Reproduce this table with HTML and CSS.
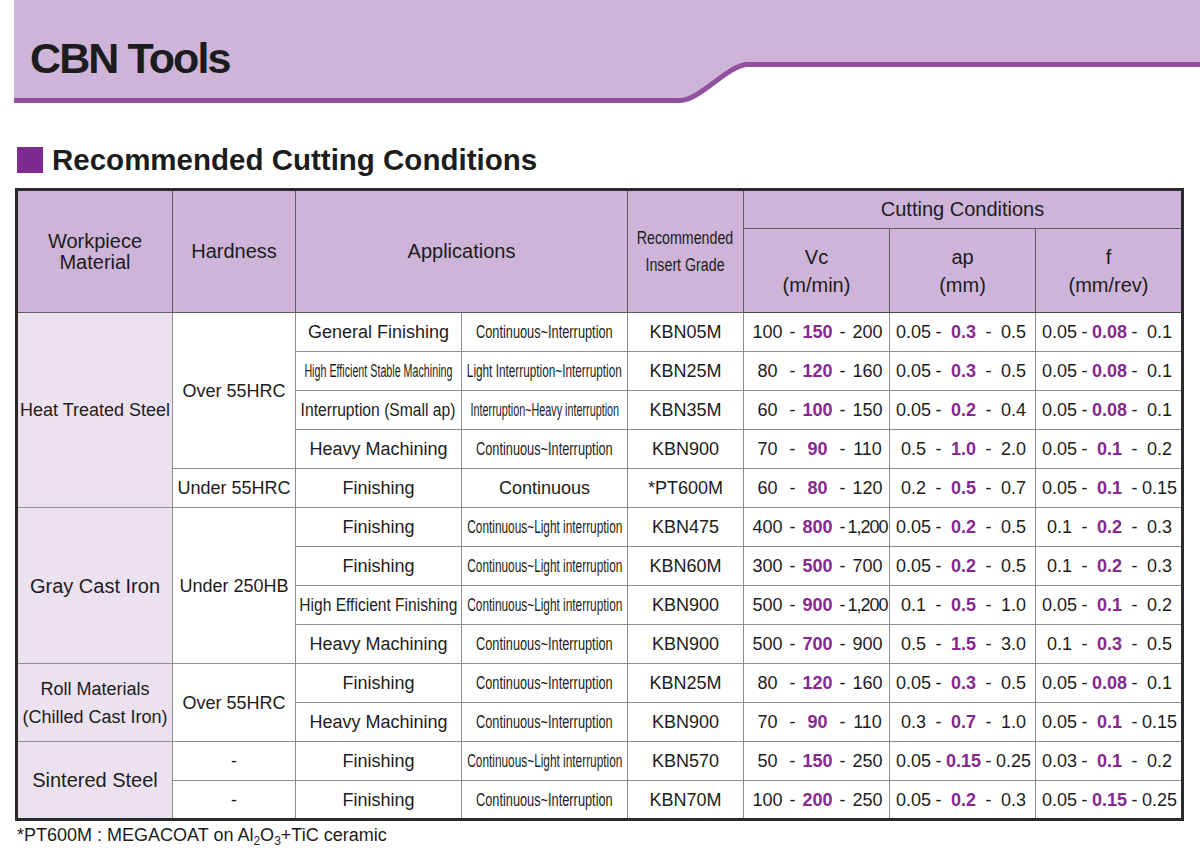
FILE: index.html
```html
<!DOCTYPE html>
<html lang="en">
<head>
<meta charset="utf-8">
<title>CBN Tools - Recommended Cutting Conditions</title>
<link rel="stylesheet" href="styles.css">
</head>
<body>
<header class="banner">
  <svg class="banner-bg" width="1186" height="106" viewBox="0 0 1186 106" aria-hidden="true">
    <path d="M0 0H1186V63H734C714 63 686 99 666 99H0Z" fill="#cdb4d8"/>
    <path d="M0 100.5H666C686 100.5 714 64.5 734 64.5H1186" fill="none" stroke="#9150a0" stroke-width="5"/>
  </svg>
  <h1 class="banner-title">CBN Tools</h1>
</header>

<h2 class="section-title">Recommended Cutting Conditions</h2>

<table class="cond">
  <colgroup>
    <col class="w-mat"><col class="w-hard"><col class="w-app1"><col class="w-app2"><col class="w-grade"><col class="w-vc"><col class="w-ap"><col class="w-f">
  </colgroup>
  <thead>
    <tr class="h1">
      <th rowspan="2" class="two">Workpiece<br>Material</th>
      <th rowspan="2">Hardness</th>
      <th rowspan="2" colspan="2">Applications</th>
      <th rowspan="2"><div class="fit col"><span class="sq sq79 hdr-n">Recommended</span><span class="sq sq79 hdr-n">Insert Grade</span></div></th>
      <th colspan="3">Cutting Conditions</th>
    </tr>
    <tr class="h2">
      <th class="unit">Vc<br>(m/min)</th>
      <th class="unit">ap<br>(mm)</th>
      <th class="unit">f<br>(mm/rev)</th>
    </tr>
  </thead>
  <tbody>
    <tr>
      <td rowspan="5" class="mat">Heat Treated Steel</td>
      <td rowspan="4">Over 55HRC</td>
      <td>General Finishing</td>
      <td><div class="fit"><span class="sq sq71">Continuous~Interruption</span></div></td>
      <td>KBN05M</td>
      <td><div class="rng"><span>100</span><span>-</span><b>150</b><span>-</span><span>200</span></div></td>
      <td><div class="rng"><span>0.05</span><span>-</span><b>0.3</b><span>-</span><span>0.5</span></div></td>
      <td><div class="rng"><span>0.05</span><span>-</span><b>0.08</b><span>-</span><span>0.1</span></div></td>
    </tr>
    <tr>
      <td><div class="fit"><span class="sq sq59">High Efficient Stable Machining</span></div></td>
      <td><div class="fit"><span class="sq sq65">Light Interruption~Interruption</span></div></td>
      <td>KBN25M</td>
      <td><div class="rng"><span>80</span><span>-</span><b>120</b><span>-</span><span>160</span></div></td>
      <td><div class="rng"><span>0.05</span><span>-</span><b>0.3</b><span>-</span><span>0.5</span></div></td>
      <td><div class="rng"><span>0.05</span><span>-</span><b>0.08</b><span>-</span><span>0.1</span></div></td>
    </tr>
    <tr>
      <td><div class="fit"><span class="sq sq87">Interruption (Small ap)</span></div></td>
      <td><div class="fit"><span class="sq sq60">Interruption~Heavy interruption</span></div></td>
      <td>KBN35M</td>
      <td><div class="rng"><span>60</span><span>-</span><b>100</b><span>-</span><span>150</span></div></td>
      <td><div class="rng"><span>0.05</span><span>-</span><b>0.2</b><span>-</span><span>0.4</span></div></td>
      <td><div class="rng"><span>0.05</span><span>-</span><b>0.08</b><span>-</span><span>0.1</span></div></td>
    </tr>
    <tr>
      <td>Heavy Machining</td>
      <td><div class="fit"><span class="sq sq71">Continuous~Interruption</span></div></td>
      <td>KBN900</td>
      <td><div class="rng"><span>70</span><span>-</span><b>90</b><span>-</span><span>110</span></div></td>
      <td><div class="rng"><span>0.5</span><span>-</span><b>1.0</b><span>-</span><span>2.0</span></div></td>
      <td><div class="rng"><span>0.05</span><span>-</span><b>0.1</b><span>-</span><span>0.2</span></div></td>
    </tr>
    <tr>
      <td>Under 55HRC</td>
      <td>Finishing</td>
      <td>Continuous</td>
      <td>*PT600M</td>
      <td><div class="rng"><span>60</span><span>-</span><b>80</b><span>-</span><span>120</span></div></td>
      <td><div class="rng"><span>0.2</span><span>-</span><b>0.5</b><span>-</span><span>0.7</span></div></td>
      <td><div class="rng"><span>0.05</span><span>-</span><b>0.1</b><span>-</span><span>0.15</span></div></td>
    </tr>
    <tr>
      <td rowspan="4" class="mat big">Gray Cast Iron</td>
      <td rowspan="4">Under 250HB</td>
      <td>Finishing</td>
      <td><div class="fit"><span class="sq sq66">Continuous~Light interruption</span></div></td>
      <td>KBN475</td>
      <td><div class="rng"><span>400</span><span>-</span><b>800</b><span>-</span><span class="tight">1,200</span></div></td>
      <td><div class="rng"><span>0.05</span><span>-</span><b>0.2</b><span>-</span><span>0.5</span></div></td>
      <td><div class="rng"><span>0.1</span><span>-</span><b>0.2</b><span>-</span><span>0.3</span></div></td>
    </tr>
    <tr>
      <td>Finishing</td>
      <td><div class="fit"><span class="sq sq66">Continuous~Light interruption</span></div></td>
      <td>KBN60M</td>
      <td><div class="rng"><span>300</span><span>-</span><b>500</b><span>-</span><span>700</span></div></td>
      <td><div class="rng"><span>0.05</span><span>-</span><b>0.2</b><span>-</span><span>0.5</span></div></td>
      <td><div class="rng"><span>0.1</span><span>-</span><b>0.2</b><span>-</span><span>0.3</span></div></td>
    </tr>
    <tr>
      <td><div class="fit"><span class="sq sq86">High Efficient Finishing</span></div></td>
      <td><div class="fit"><span class="sq sq66">Continuous~Light interruption</span></div></td>
      <td>KBN900</td>
      <td><div class="rng"><span>500</span><span>-</span><b>900</b><span>-</span><span class="tight">1,200</span></div></td>
      <td><div class="rng"><span>0.1</span><span>-</span><b>0.5</b><span>-</span><span>1.0</span></div></td>
      <td><div class="rng"><span>0.05</span><span>-</span><b>0.1</b><span>-</span><span>0.2</span></div></td>
    </tr>
    <tr>
      <td>Heavy Machining</td>
      <td><div class="fit"><span class="sq sq71">Continuous~Interruption</span></div></td>
      <td>KBN900</td>
      <td><div class="rng"><span>500</span><span>-</span><b>700</b><span>-</span><span>900</span></div></td>
      <td><div class="rng"><span>0.5</span><span>-</span><b>1.5</b><span>-</span><span>3.0</span></div></td>
      <td><div class="rng"><span>0.1</span><span>-</span><b>0.3</b><span>-</span><span>0.5</span></div></td>
    </tr>
    <tr>
      <td rowspan="2" class="mat two-body">Roll Materials<br>(Chilled Cast Iron)</td>
      <td rowspan="2">Over 55HRC</td>
      <td>Finishing</td>
      <td><div class="fit"><span class="sq sq71">Continuous~Interruption</span></div></td>
      <td>KBN25M</td>
      <td><div class="rng"><span>80</span><span>-</span><b>120</b><span>-</span><span>160</span></div></td>
      <td><div class="rng"><span>0.05</span><span>-</span><b>0.3</b><span>-</span><span>0.5</span></div></td>
      <td><div class="rng"><span>0.05</span><span>-</span><b>0.08</b><span>-</span><span>0.1</span></div></td>
    </tr>
    <tr>
      <td>Heavy Machining</td>
      <td><div class="fit"><span class="sq sq71">Continuous~Interruption</span></div></td>
      <td>KBN900</td>
      <td><div class="rng"><span>70</span><span>-</span><b>90</b><span>-</span><span>110</span></div></td>
      <td><div class="rng"><span>0.3</span><span>-</span><b>0.7</b><span>-</span><span>1.0</span></div></td>
      <td><div class="rng"><span>0.05</span><span>-</span><b>0.1</b><span>-</span><span>0.15</span></div></td>
    </tr>
    <tr>
      <td rowspan="2" class="mat big">Sintered Steel</td>
      <td>-</td>
      <td>Finishing</td>
      <td><div class="fit"><span class="sq sq66">Continuous~Light interruption</span></div></td>
      <td>KBN570</td>
      <td><div class="rng"><span>50</span><span>-</span><b>150</b><span>-</span><span>250</span></div></td>
      <td><div class="rng"><span>0.05</span><span>-</span><b>0.15</b><span>-</span><span>0.25</span></div></td>
      <td><div class="rng"><span>0.03</span><span>-</span><b>0.1</b><span>-</span><span>0.2</span></div></td>
    </tr>
    <tr>
      <td>-</td>
      <td>Finishing</td>
      <td><div class="fit"><span class="sq sq71">Continuous~Interruption</span></div></td>
      <td>KBN70M</td>
      <td><div class="rng"><span>100</span><span>-</span><b>200</b><span>-</span><span>250</span></div></td>
      <td><div class="rng"><span>0.05</span><span>-</span><b>0.2</b><span>-</span><span>0.3</span></div></td>
      <td><div class="rng"><span>0.05</span><span>-</span><b>0.15</b><span>-</span><span>0.25</span></div></td>
    </tr>
  </tbody>
</table>

<p class="note">*PT600M : MEGACOAT on Al<sub>2</sub>O<sub>3</sub>+TiC ceramic</p>
</body>
</html>
```

FILE: styles.css
```css
* { box-sizing: border-box; }

html, body {
  margin: 0;
  padding: 0;
  background: #ffffff;
}

body {
  width: 1200px;
  height: 855px;
  overflow: hidden;
  font-family: "Liberation Sans", Arial, Helvetica, sans-serif;
  color: #1c1c1c;
}

/* ---------- top banner ---------- */
.banner {
  position: relative;
  margin-left: 14px;
  height: 104px;
}

.banner-bg {
  position: absolute;
  left: 0;
  top: 0;
}

.banner-title {
  position: relative;
  margin: 0;
  padding: 37px 0 0 16px;
  font-size: 43px;
  line-height: 1;
  font-weight: bold;
  letter-spacing: -1.9px;
  color: #1c1c1c;
}

/* ---------- section heading ---------- */
.section-title {
  display: flex;
  align-items: center;
  gap: 9px;
  margin: 43px 0 0 17px;
  height: 26px;
  font-size: 29.5px;
  line-height: 26px;
  font-weight: bold;
  color: #1c1c1c;
}

.section-title::before {
  content: "";
  flex: none;
  width: 26px;
  height: 26px;
  background: #7d2b91;
}

/* ---------- table ---------- */
.cond {
  margin: 15px 0 0 15px;
  border-collapse: collapse;
  table-layout: fixed;
  width: 1169px;
  border: 3px solid #2a2a2a;
}

.w-mat { width: 156px; }
.w-hard { width: 123px; }
.w-app1 { width: 166px; }
.w-app2 { width: 166px; }
.w-grade { width: 116px; }
.w-vc { width: 146px; }
.w-ap { width: 146px; }
.w-f { width: 147px; }

.cond th,
.cond td {
  padding: 0;
  border: 1px solid #8e8e8e;
  text-align: center;
  vertical-align: middle;
  white-space: nowrap;
  overflow: visible;
}

.cond th {
  background: #cdb4d8;
  font-weight: normal;
  font-size: 20px;
  line-height: 21px;
  border-color: #5e5e5e;
  color: #1c1c1c;
}

.cond thead tr:last-child th { border-bottom-color: #4a4a4a; }

.h1 { height: 39px; }
.h2 { height: 84px; }

.cond th.unit { line-height: 28px; }

.cond td {
  font-size: 18px;
  line-height: 22px;
  height: 39px;
}

.cond td.mat { background: #ece2ef; }
.cond td.big { font-size: 20px; }
.cond td.two-body { line-height: 28px; }

/* squeezed (condensed) text */
.fit {
  display: flex;
  justify-content: center;
}

.fit.col {
  flex-direction: column;
  align-items: center;
}

.sq {
  display: inline-block;
  flex: none;
  white-space: nowrap;
  transform-origin: center;
}

.hdr-n { font-size: 18px; line-height: 27px; }

.sq59 { transform: scaleX(0.595); }
.sq60 { transform: scaleX(0.60); }
.sq65 { transform: scaleX(0.655); }
.sq66 { transform: scaleX(0.658); }
.sq71 { transform: scaleX(0.71); }
.sq79 { transform: scaleX(0.79); }
.sq86 { transform: scaleX(0.865); }
.sq87 { transform: scaleX(0.87); }

/* numeric ranges */
.rng {
  display: grid;
  grid-template-columns: repeat(5, 25px);
  padding-left: 11px;
  justify-items: center;
}

.rng > * { white-space: nowrap; }

.rng b {
  color: #86288f;
  font-weight: bold;
}

.rng .tight { letter-spacing: -1px; }

/* ---------- footnote ---------- */
.note {
  margin: 3px 0 0 17px;
  font-size: 18px;
  line-height: 22px;
  color: #1c1c1c;
}

.note sub {
  font-size: 12px;
  line-height: 0;
  vertical-align: -4px;
}
```
